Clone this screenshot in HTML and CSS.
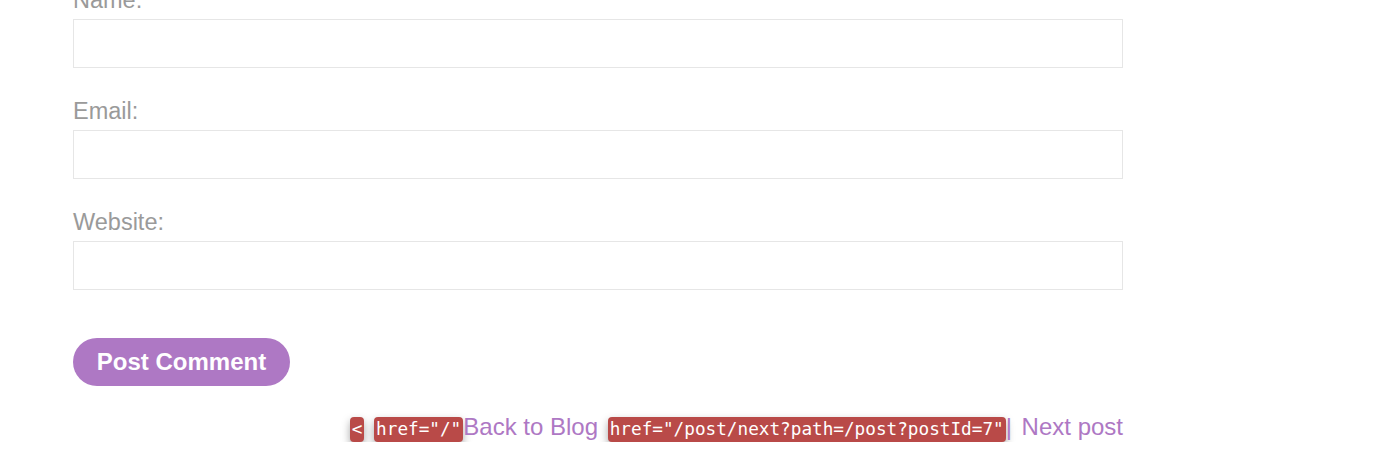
FILE: index.html
```html
<!DOCTYPE html>
<html>
<head>
<meta charset="utf-8">
<link rel="stylesheet" href="styles.css">
</head>
<body>
<div class="page">
  <form class="comment-form">
    <label class="field-label">Name:</label>
    <input class="field-input" type="text">
    <label class="field-label">Email:</label>
    <input class="field-input" type="text">
    <label class="field-label">Website:</label>
    <input class="field-input" type="text">
    <button class="btn" type="button">Post Comment</button>
  </form>
  <div class="nav"><span class="badge">&lt;</span> <span class="badge">href="/"</span><a class="link">Back to Blog</a> <span class="badge">href="/post/next?path=/post?postId=7"</span><a class="link"><span class="sep">|</span> Next post</a></div>
</div>
</body>
</html>
```
FILE: styles.css
```css
html, body {
  margin: 0;
  padding: 0;
  background: #ffffff;
}
.page {
  width: 1050px;
  margin: -14px 0 0 73px;
  font-family: "Liberation Sans", Arial, sans-serif;
}
.comment-form {
  display: flex;
  flex-direction: column;
  align-items: flex-start;
}
.field-label {
  display: block;
  font-size: 23.5px;
  line-height: 28px;
  color: #9a9a9a;
  margin-bottom: 5px;
}
.field-input {
  box-sizing: border-box;
  width: 1050px;
  height: 49px;
  border: 1px solid #e6e6e6;
  margin: 0 0 29px 0;
  padding: 0;
  background: #fff;
}
.field-input:last-of-type {
  margin-bottom: 48px;
}
.btn {
  box-sizing: border-box;
  height: 48px;
  width: 217px;
  border: none;
  border-radius: 24px;
  background: #ae78c4;
  color: #ffffff;
  font-family: "Liberation Sans", Arial, sans-serif;
  font-weight: bold;
  font-size: 24px;
  padding: 0;
  margin: 0;
}
.nav {
  margin-top: 27px;
  text-align: right;
  font-size: 24px;
  line-height: 28px;
}
.link {
  color: #ae78c4;
  text-decoration: none;
}
.sep {
  margin-right: 3px;
}
.badge {
  display: inline-block;
  background: #b94a48;
  color: #ffffff;
  font-family: "DejaVu Sans Mono", monospace;
  font-size: 17.7px;
  line-height: 23px;
  padding: 1px 2px;
  margin-left: 3px;
  border-radius: 4px;
  box-shadow: 0 4px 8px rgba(0, 0, 0, 0.35);
}
```
